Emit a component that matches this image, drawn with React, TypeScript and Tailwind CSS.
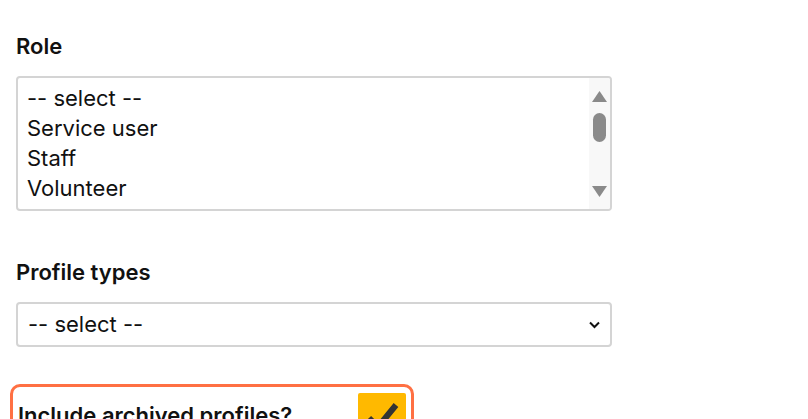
import React from 'react';

const roles = ['-- select --', 'Service user', 'Staff', 'Volunteer'];

const App: React.FC = () => {
  return (
    <div className="min-h-[419px] bg-white px-4 pt-8 text-[#111] font-['Inter',_'Liberation_Sans',_sans-serif]">
      <label className="mb-4 block text-[22px] font-semibold leading-[28px]">Role</label>
      <div
        role="listbox"
        className="flex h-[135px] w-[596px] overflow-hidden rounded-[4px] border-2 border-[#d4d4d4] text-[22px] leading-[30px]"
      >
        <div className="flex-1 overflow-hidden pt-[5px]">
          {roles.map((r) => (
            <div key={r} role="option" className="px-[9px]">
              {r}
            </div>
          ))}
        </div>
        {/* scrollbar */}
        <div className="flex w-[21px] flex-col items-center bg-[#f8f8f8] pt-[13px]">
          <svg width="15" height="11" viewBox="0 0 15 11">
            <path d="M7.5 0 L15 11 L0 11 Z" fill="#8a8a8a" />
          </svg>
          <div className="mt-[11px] h-[29px] w-[13px] rounded-full bg-[#8a8a8a]" />
          <svg className="mt-[44px]" width="15" height="11" viewBox="0 0 15 11">
            <path d="M0 0 L15 0 L7.5 11 Z" fill="#8a8a8a" />
          </svg>
        </div>
      </div>

      <label className="mt-[47px] mb-4 block text-[22px] font-semibold leading-[28px]">Profile types</label>
      <div className="relative w-[596px]">
        <select className="h-[45px] w-full appearance-none rounded-[4px] border-2 border-[#d4d4d4] bg-white px-[10px] text-[22px] outline-none">
          <option>-- select --</option>
        </select>
        <svg
          className="pointer-events-none absolute right-[12px] top-[19px]"
          width="11"
          height="8"
          viewBox="0 0 11 8"
        >
          <path d="M1 1.5 L5.5 6 L10 1.5" fill="none" stroke="#111" strokeWidth="2" />
        </svg>
      </div>

      <div className="-ml-[6px] mt-[37px] flex w-[404px] items-start justify-between rounded-[10px] border-[3px] border-[#ff7043] pl-[5px] pr-[5px] pt-[6px] pb-3">
        <span className="mt-[8px] text-[22px] font-semibold leading-[28px]">Include archived profiles?</span>
        <span className="flex h-[48px] w-[48px] items-center justify-center rounded-[2px] bg-[#ffb900]">
          <svg width="36" height="36" viewBox="0 0 36 36">
            <path d="M5 19 L14 28 L32 6" fill="none" stroke="#333" strokeWidth="6" />
          </svg>
        </span>
      </div>
    </div>
  );
};

export default App;
